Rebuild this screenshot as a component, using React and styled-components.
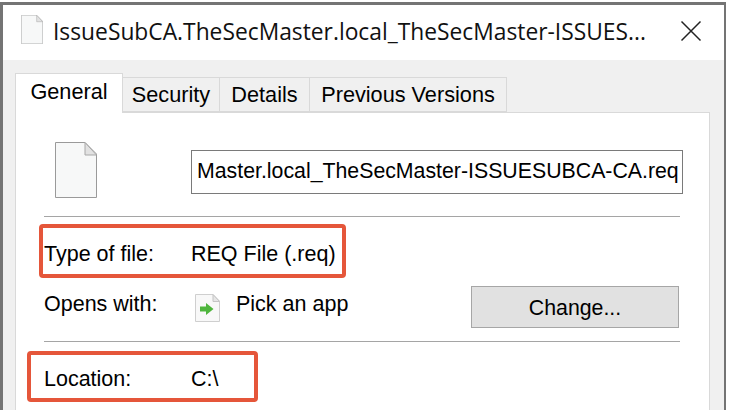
import React from "react";
import styled, { createGlobalStyle } from "styled-components";

const Global = createGlobalStyle`
  html, body { margin: 0; padding: 0; background: #fff; width: 734px; height: 410px; overflow: hidden; }
  * { box-sizing: border-box; }
`;

const Page = styled.div`
  width: 734px;
  height: 410px;
  padding: 2px 8px 0 0;
  background: #fff;
  overflow: hidden;
`;

const Win = styled.div`
  width: 726px;
  height: 420px;
  border: 3px solid #747474;
  border-right-width: 2px;
  background: #f0f0f0;
  color: #000;
  font-family: "Liberation Sans", Arial, sans-serif;
`;

const TitleBar = styled.div`
  height: 55px;
  background: #fff;
  display: flex;
  align-items: center;
  padding: 0 17px 0 18px;
`;

const TitleIcon = styled.div`
  display: flex;
  margin-top: -6px;
`;

const TitleText = styled.div`
  flex: 1;
  margin-left: 10px;
  margin-top: -3px;
  font-family: "Open Sans", sans-serif;
  font-size: 22.8px;
  white-space: nowrap;
  color: #111;
`;

const Close = styled.button`
  width: 22px;
  height: 22px;
  border: 0;
  padding: 0;
  background: none;
  display: flex;
  margin-right: 5px;
  margin-top: -3px;
`;

const Body = styled.div`
  padding: 13px 15px 0 12px;
`;

const Tabs = styled.div`
  display: flex;
  align-items: flex-end;
  height: 39px;
`;

const Tab = styled.div`
  width: ${(p) => p.$w}px;
  height: ${(p) => (p.$active ? 40 : 35)}px;
  margin-bottom: ${(p) => (p.$active ? -1 : 0)}px;
  padding-top: ${(p) => (p.$active ? 6 : 5)}px;
  background: ${(p) => (p.$active ? "#fff" : "#f0f0f0")};
  border: 1px solid #d9d9d9;
  border-left-width: ${(p) => (p.$active ? 1 : 0)}px;
  border-bottom-width: ${(p) => (p.$active ? 0 : 1)}px;
  text-align: center;
  font-size: 21.7px;
  line-height: 24px;
  white-space: nowrap;
  position: relative;
  z-index: ${(p) => (p.$active ? 1 : 0)};
`;

const Panel = styled.div`
  width: 695px;
  height: 320px;
  background: #fff;
  border: 1px solid #d9d9d9;
  padding: 37px 26px 0 28px;
`;

const Head = styled.div`
  display: flex;
  align-items: center;
  height: 44px;
`;

const IconCell = styled.div`
  width: 147px;
  flex-shrink: 0;
  display: flex;
  padding-left: 11px;
  padding-bottom: 4px;
`;

const NameBox = styled.div`
  width: 492px;
  height: 44px;
  border: 1px solid #7a7a7a;
  font-size: 21.3px;
  line-height: 41px;
  padding-left: 5px;
  white-space: nowrap;
  flex-shrink: 0;
`;

const Divider = styled.div`
  width: 636px;
  height: 1px;
  background: #a5a5a5;
  margin-top: ${(p) => p.$top}px;
`;

const Row = styled.div`
  position: relative;
  display: flex;
  align-items: center;
  height: ${(p) => p.$h}px;
  padding-bottom: ${(p) => p.$pb || 0}px;
  font-size: 21.5px;
`;

const Label = styled.div`
  width: 147px;
  flex-shrink: 0;
`;

const Highlight = styled.div`
  position: absolute;
  left: ${(p) => p.$l}px;
  top: ${(p) => p.$t}px;
  width: ${(p) => p.$w}px;
  height: ${(p) => p.$h}px;
  border: 4px solid #e5563a;
  border-radius: 4px;
`;

const AppIcon = styled.div`
  width: 45px;
  display: flex;
  padding-left: 3px;
  margin-top: 8px;
`;

const ChangeButton = styled.button`
  width: 208px;
  height: 42px;
  margin-left: auto;
  margin-right: 4px;
  margin-top: 6px;
  background: #e1e1e1;
  border: 1px solid #a6a6a6;
  font: inherit;
  font-size: 21.3px;
  color: #000;
  padding: 2px 0 0;
`;

const BlankFile = ({ w, h }) => (
  <svg width={w} height={h} viewBox="0 0 42 56" style={{ display: "block" }}>
    <path d="M.5.5H30L41.5 12V55.5H.5Z" fill="#f7f8f8" stroke="#9a9a9a" />
    <path d="M30 .5V13H41.5Z" fill="#e2e2e2" stroke="#a8a8a8" />
  </svg>
);

const OpenFile = () => (
  <svg width="26" height="28" viewBox="0 0 26 28" style={{ display: "block" }}>
    <path d="M1.5.5H19L25.5 7V27.5H1.5Z" fill="#f8f8f8" stroke="#cfcfcf" />
    <path d="M19 .5V7.5H25.5Z" fill="#e6e6e6" stroke="#c4c4c4" />
    <path d="M6 12.5H12V9L19.5 15L12 21V17.5H6Z" fill="#4fb53d" />
  </svg>
);

export default function App() {
  return (
    <Page>
      <Global />
      <Win>
        <TitleBar>
          <TitleIcon><BlankFile w={22} h={29} /></TitleIcon>
          <TitleText>IssueSubCA.TheSecMaster.local_TheSecMaster-ISSUES...</TitleText>
          <Close aria-label="Close">
            <svg width="22" height="22" viewBox="0 0 22 22">
              <path d="M1.5 1.5L20.5 20.5M20.5 1.5L1.5 20.5" stroke="#222" strokeWidth="1.5" fill="none" />
            </svg>
          </Close>
        </TitleBar>
        <Body>
          <Tabs>
            <Tab $active $w={108}>General</Tab>
            <Tab $w={97}>Security</Tab>
            <Tab $w={90}>Details</Tab>
            <Tab $w={197}>Previous Versions</Tab>
          </Tabs>
          <Panel>
            <Head>
              <IconCell>
                <BlankFile w={42} h={56} />
              </IconCell>
              <NameBox>Master.local_TheSecMaster-ISSUESUBCA-CA.req</NameBox>
            </Head>
            <Divider $top={22} />
            <Row $h={74}>
              <Highlight $l={-5} $t={7} $w={307} $h={54} />
              <Label>Type of file:</Label>
              <div>REQ File (.req)</div>
            </Row>
            <Row $h={50} $pb={24}>
              <Label>Opens with:</Label>
              <AppIcon><OpenFile /></AppIcon>
              <div>Pick an app</div>
              <ChangeButton>Change...</ChangeButton>
            </Row>
            <Divider $top={0} />
            <Row $h={74}>
              <Highlight $l={-17} $t={9} $w={231} $h={51} />
              <Label>Location:</Label>
              <div>C:\</div>
            </Row>
          </Panel>
        </Body>
      </Win>
    </Page>
  );
}
